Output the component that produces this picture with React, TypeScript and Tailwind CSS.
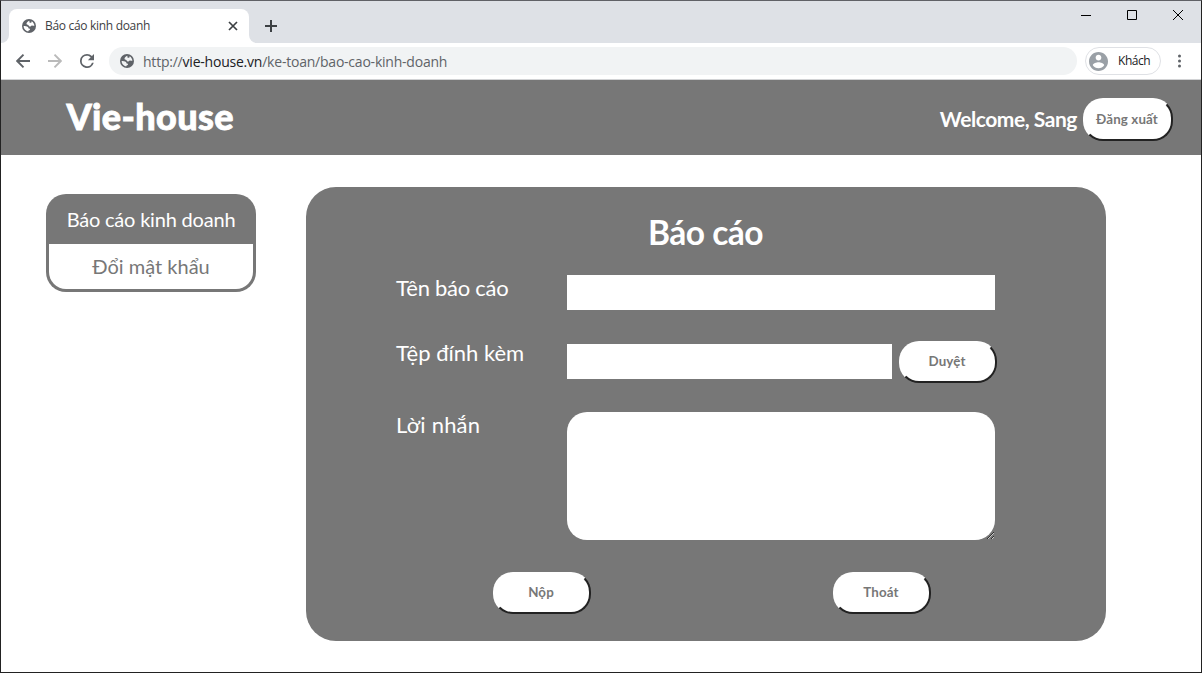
import type { ReactNode } from "react";

function Globe({ land }: { land: string }) {
  return (
    <svg viewBox="0 0 14 14" className="size-3.5 shrink-0">
      <circle cx="7" cy="7" r="7" fill="#5f6368" />
      <path
        d="M7.300 1.700C5.900 2.300 4.600 3.300 4.500 4.500 4.400 5.700 5.600 5.600 6.300 6.100 7 6.700 6.600 7.500 7.700 7.500 9.200 7.600 8.800 6.600 9.900 6.400 10.900 6.300 11.300 7 12.400 6.800 12.300 5 11.200 3.200 9.600 2.300L9.300 3.700H7.600z"
        fill={land}
      />
      <path
        d="M1.600 7C3.200 7.100 4.900 7.100 5.900 7.900 6.800 8.700 6 9.400 7.200 9.600 8 9.800 8.300 10.500 7.700 11.100 7 11.700 6.400 11.600 6.200 12.400 3.500 12 1.600 9.800 1.600 7z"
        fill={land}
      />
    </svg>
  );
}

function PillButton({ className, children }: { className: string; children: ReactNode }) {
  return (
    <button
      className={`rounded-[20px] border-2 border-t-transparent border-l-transparent border-r-[#222] border-b-[#222] bg-white pr-0.5 text-center text-[13.33px] font-bold tracking-[0.12px] text-[#777] ${className}`}
    >
      {children}
    </button>
  );
}

function TabStrip() {
  return (
    <div className="flex h-[42px] justify-between bg-[#dee1e6]">
      <div className="flex">
        <div className="w-2 bg-white">
          <div className="h-full rounded-br-lg bg-[#dee1e6]" />
        </div>
        <div className="mt-2 flex w-60 items-center rounded-t-lg bg-white pr-[11px] pb-px pl-[13px]">
          <Globe land="#fff" />
          <span className="ml-[9px] flex-1 whitespace-nowrap font-['Open_Sans',sans-serif] text-[12px] tracking-[-0.31px] text-[#3c4043]">
            Báo cáo kinh doanh
          </span>
          <svg viewBox="0 0 10 10" className="size-2.5" stroke="#3c4043" strokeWidth="1.7">
            <path d="M1 1l8 8M9 1L1 9" />
          </svg>
        </div>
        <div className="w-2 bg-white">
          <div className="h-full rounded-bl-lg bg-[#dee1e6]" />
        </div>
        <svg viewBox="0 0 12 12" className="mt-[19px] ml-2 size-3" stroke="#3c4043" strokeWidth="2">
          <path d="M6 0v12M0 6h12" />
        </svg>
      </div>
      <div className="mt-[9px] mr-[18px] flex h-[11px] gap-9">
        <svg viewBox="0 0 10 10" className="size-2.5" stroke="#000">
          <path d="M0 5.5h10" />
        </svg>
        <svg viewBox="0 0 10 10" className="size-2.5" fill="none" stroke="#000">
          <path d="M.5.5h9v9h-9z" />
        </svg>
        <svg viewBox="0 0 10 10" className="size-2.5" stroke="#000">
          <path d="M0 0l10 10M10 0L0 10" />
        </svg>
      </div>
    </div>
  );
}

function Toolbar() {
  return (
    <div className="flex h-[37px] items-center border-b border-[#d2d3d5] bg-white pl-[15px]">
      <svg viewBox="0 0 14 14" className="size-3.5" fill="none" stroke="#5f6368" strokeWidth="1.9">
        <path d="M14 7H1.5M7.500 .7L1.200 7l6.300 6.300" />
      </svg>
      <svg viewBox="0 0 14 14" className="ml-[18px] size-3.5" fill="none" stroke="#bababa" strokeWidth="1.9">
        <path d="M0 7h12.5M6.500 .7l6.300 6.300-6.300 6.300" />
      </svg>
      <svg viewBox="4 4 16 16" className="ml-[18px] size-3.5" fill="#5f6368">
        <path d="M17.65 6.35A7.958 7.958 0 0 0 12 4a8 8 0 1 0 7.730 10h-2.080A6 6 0 1 1 12 6c1.660 0 3.140.69 4.220 1.780L13 11h7V4z" />
      </svg>
      <div className="ml-[15px] flex h-7 w-[968px] items-center rounded-full bg-[#f1f3f4] pl-[11px]">
        <Globe land="#f1f3f4" />
        <span className="ml-[9px] whitespace-nowrap font-['Open_Sans',sans-serif] text-[14px] tracking-[-0.22px] text-[#5f6368]">
          http://<span className="text-[#202124]">vie-house.vn</span>/ke-toan/bao-cao-kinh-doanh
        </span>
      </div>
      <div className="ml-2 flex h-7 w-[76px] items-center rounded-full border border-[#dfe1e5] pl-[3px]">
        <svg viewBox="2 2 20 20" className="size-[19px]" fill="#9aa0a6">
          <path d="M12 2C6.480 2 2 6.480 2 12s4.480 10 10 10 10-4.480 10-10S17.520 2 12 2zm0 3c1.660 0 3 1.340 3 3s-1.340 3-3 3-3-1.340-3-3 1.340-3 3-3zm0 14.200c-2.500 0-4.710-1.280-6-3.220.03-1.990 4-3.080 6-3.080 1.990 0 5.970 1.090 6 3.080-1.290 1.940-3.500 3.220-6 3.220z" />
        </svg>
        <span className="ml-[10px] font-['Open_Sans',sans-serif] text-[12px] tracking-[-0.45px] text-[#202124]">Khách</span>
      </div>
      <svg viewBox="0 0 4 14" className="ml-[17px] h-3.5 w-1" fill="#5f6368">
        <circle cx="1.500" cy="2" r="1.5" />
        <circle cx="1.500" cy="7" r="1.5" />
        <circle cx="1.500" cy="12" r="1.5" />
      </svg>
    </div>
  );
}

function Header() {
  return (
    <header className="flex h-[75px] items-center justify-between bg-[#777] pr-7 pl-[65px] text-white">
      <h1 className="pb-0.5 pl-[0.5px] text-[36px] leading-[73px] font-black tracking-[0.35px] [-webkit-text-stroke:0.8px_#fff]">
        Vie-house
      </h1>
      <div className="flex items-center gap-1.5 pt-0.5">
        <span className="text-[21px] font-bold tracking-[-0.45px]">Welcome, Sang</span>
        <PillButton className="mt-0.5 h-[43px] w-[90px]">Đăng xuất</PillButton>
      </div>
    </header>
  );
}

function Sidebar() {
  return (
    <nav className="mt-[39px] h-[98px] w-[210px] shrink-0 rounded-[20px] bg-[#777] p-[3px] text-center text-[20px]">
      <div className="h-[47px] leading-[44px] tracking-[-0.2px] text-white">Báo cáo kinh doanh</div>
      <div className="h-[45px] rounded-b-[17px] bg-white leading-[44px] text-[#777]">Đổi mật khẩu</div>
    </nav>
  );
}

function ReportForm() {
  return (
    <main className="mt-8 ml-[50px] h-[454px] w-[800px] rounded-[30px] bg-[#777] pl-[90px] text-[22px] text-white">
      <h2 className="mr-[91px] pt-[23px] text-center text-[33.5px] leading-[44px] font-bold tracking-[-0.5px]">Báo cáo</h2>
      <div className="mt-[21px] flex h-[35px]">
        <label className="w-[171px] leading-[26px] tracking-[-0.26px]">Tên báo cáo</label>
        <input className="h-[35px] w-[428px] bg-white" />
      </div>
      <div className="mt-[31px] flex h-[42px]">
        <label className="w-[171px] leading-[24px]">Tệp đính kèm</label>
        <input className="mt-[3px] h-[35px] w-[325px] bg-white" />
        <PillButton className="ml-[7px] h-[42px] w-[98px]">Duyệt</PillButton>
      </div>
      <div className="mt-[29px] flex h-[128px]">
        <label className="w-[171px] leading-[26px] tracking-[0.2px]">Lời nhắn</label>
        <textarea className="h-[128px] w-[428px] resize rounded-[20px] bg-white" />
      </div>
      <div className="mt-8 ml-[97px] flex gap-[242px]">
        <PillButton className="h-[42px] w-[98px]">Nộp</PillButton>
        <PillButton className="h-[42px] w-[98px]">Thoát</PillButton>
      </div>
    </main>
  );
}

export default function App() {
  return (
    <div className="h-[673px] w-[1202px] overflow-hidden border border-[#222] border-t-[#606166] bg-white font-[Lato,sans-serif]">
      <TabStrip />
      <Toolbar />
      <Header />
      <div className="flex items-start pl-[45px]">
        <Sidebar />
        <ReportForm />
      </div>
    </div>
  );
}
